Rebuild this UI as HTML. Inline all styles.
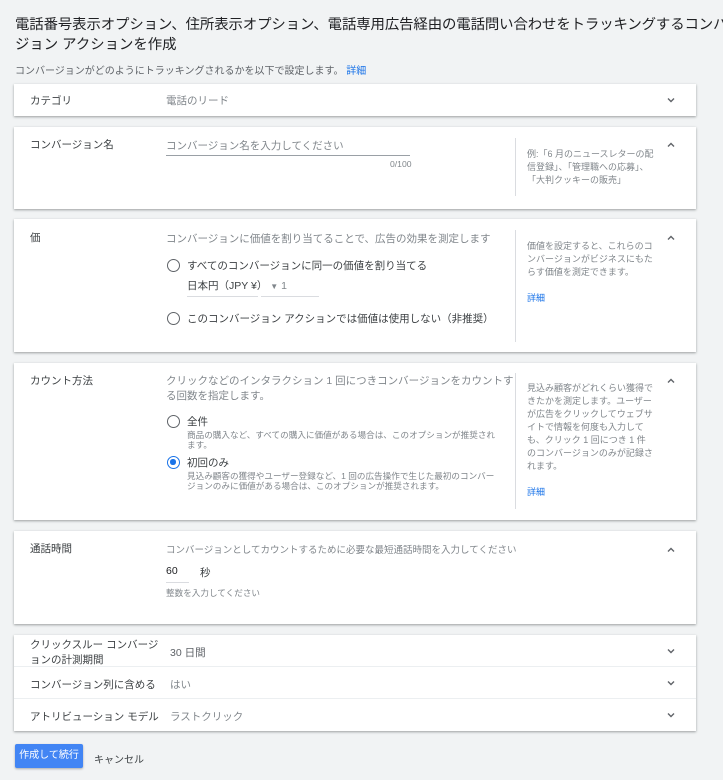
<!DOCTYPE html>
<html><head><meta charset="utf-8"><style>
*{margin:0;padding:0;box-sizing:border-box}
body{width:723px;height:780px;background:#f1f3f4;font-family:"Liberation Sans","Noto Sans CJK JP",sans-serif;color:#3c4043;position:relative;overflow:hidden}
.a{position:absolute;white-space:nowrap}
.card{position:absolute;left:14px;width:682px;background:#fff;box-shadow:0 1px 2px rgba(60,64,67,.35),0 1px 3px rgba(60,64,67,.15)}
.lbl{font-size:10.5px;color:#3c4043}
.g{color:#80868b}
.s{font-size:10.5px}
.xs{font-size:8.6px;color:#80868b}
.side{position:absolute;left:501px;width:1px;background:#dadce0}
.sidet{position:absolute;left:513px;width:127px;font-size:9px;line-height:13px;color:#80868b;white-space:normal}
.chev{position:absolute;left:652px;width:10px;height:10px}
.radio{position:absolute;width:13px;height:13px;border:1.6px solid #5f6368;border-radius:50%}
.link{color:#1a73e8}
</style></head><body>
<div class="a" style="left:15px;top:13px;font-size:14.4px;letter-spacing:-0.1px;color:#202124">電話番号表示オプション、住所表示オプション、電話専用広告経由の電話問い合わせをトラッキングするコンバー</div>
<div class="a" style="left:15px;top:33px;font-size:14.4px;color:#202124">ジョン アクションを作成</div>
<div class="a" style="left:15px;top:62px;font-size:10px;color:#5f6368">コンバージョンがどのようにトラッキングされるかを以下で設定します。 <span class="link">詳細</span></div>

<svg width="0" height="0" style="position:absolute"><defs>
<symbol id="dn" viewBox="0 0 10 10"><path d="M2 3.5L5 6.5L8 3.5" fill="none" stroke="#5f6368" stroke-width="1.4"/></symbol>
<symbol id="up" viewBox="0 0 10 10"><path d="M2 6.5L5 3.5L8 6.5" fill="none" stroke="#5f6368" stroke-width="1.4"/></symbol>
</defs></svg>

<div class="card" style="top:84px;height:32px">
<div class="a lbl" style="left:16px;top:9px">カテゴリ</div>
<div class="a s g" style="left:152px;top:9px">電話のリード</div>
<svg class="chev" style="top:11px"><use href="#dn"/></svg>
</div>

<div class="card" style="top:127px;height:82px">
<div class="a lbl" style="left:16px;top:10px">コンバージョン名</div>
<div class="a s g" style="left:152px;top:11px">コンバージョン名を入力してください</div>
<div class="a" style="left:152px;top:28px;width:244px;height:1px;background:#9aa0a6"></div>
<div class="a xs" style="left:376px;top:32px">0/100</div>
<div class="side" style="top:11px;height:58px"></div>
<div class="sidet" style="top:21px">例:「6 月のニュースレターの配信登録」、「管理職への応募」、「大判クッキーの販売」</div>
<svg class="chev" style="top:13px"><use href="#up"/></svg>
</div>

<div class="card" style="top:219px;height:133px">
<div class="a lbl" style="left:16px;top:11px">価</div>
<div class="a s g" style="left:152px;top:12px">コンバージョンに価値を割り当てることで、広告の効果を測定します</div>
<div class="radio" style="left:153px;top:40px"></div>
<div class="a s" style="left:173px;top:39px">すべてのコンバージョンに同一の価値を割り当てる</div>
<div class="a s" style="left:173px;top:59px">日本円（JPY ¥） <span class="g" style="font-size:8px">▼</span> <span class="g">1</span></div>
<div class="a" style="left:173px;top:77px;width:71px;height:1px;background:#dadce0"></div>
<div class="a" style="left:247px;top:77px;width:58px;height:1px;background:#dadce0"></div>
<div class="radio" style="left:153px;top:93px"></div>
<div class="a s" style="left:173px;top:92px">このコンバージョン アクションでは価値は使用しない（非推奨）</div>
<div class="side" style="top:11px;height:112px"></div>
<div class="sidet" style="top:21px">価値を設定すると、これらのコンバージョンがビジネスにもたらす価値を測定できます。</div>
<div class="a link" style="left:513px;top:72px;font-size:9px">詳細</div>
<svg class="chev" style="top:14px"><use href="#up"/></svg>
</div>

<div class="card" style="top:363px;height:157px">
<div class="a lbl" style="left:16px;top:10px">カウント方法</div>
<div class="a s g" style="left:152px;top:11px;line-height:15px">クリックなどのインタラクション 1 回につきコンバージョンをカウントす<br>る回数を指定します。</div>
<div class="radio" style="left:153px;top:52px"></div>
<div class="a s" style="left:173px;top:51px">全件</div>
<div class="a xs" style="left:173px;top:67px;line-height:10px">商品の購入など、すべての購入に価値がある場合は、このオプションが推奨され<br>ます。</div>
<div class="radio" style="left:153px;top:93px;border-color:#1a73e8"><div style="position:absolute;left:2.2px;top:2.2px;width:5.4px;height:5.4px;border-radius:50%;background:#1a73e8"></div></div>
<div class="a s" style="left:173px;top:92px">初回のみ</div>
<div class="a xs" style="left:173px;top:108px;line-height:10px">見込み顧客の獲得やユーザー登録など、1 回の広告操作で生じた最初のコンバー<br>ジョンのみに価値がある場合は、このオプションが推奨されます。</div>
<div class="side" style="top:10px;height:136px"></div>
<div class="sidet" style="top:19px">見込み顧客がどれくらい獲得できたかを測定します。ユーザーが広告をクリックしてウェブサイトで情報を何度も入力しても、クリック 1 回につき 1 件のコンバージョンのみが記録されます。</div>
<div class="a link" style="left:513px;top:122px;font-size:9px">詳細</div>
<svg class="chev" style="top:13px"><use href="#up"/></svg>
</div>

<div class="card" style="top:531px;height:93px">
<div class="a lbl" style="left:16px;top:10px">通話時間</div>
<div class="a g" style="left:152px;top:11px;font-size:9.5px">コンバージョンとしてカウントするために必要な最短通話時間を入力してください</div>
<div class="a s" style="left:152px;top:34px;color:#202124">60</div>
<div class="a s" style="left:186px;top:34px">秒</div>
<div class="a" style="left:152px;top:51px;width:23px;height:1px;background:#dadce0"></div>
<div class="a xs" style="left:152px;top:56px">整数を入力してください</div>
<svg class="chev" style="top:14px"><use href="#up"/></svg>
</div>

<div class="card" style="top:635px;height:96px">
<div class="a lbl" style="left:16px;top:3px;line-height:15px">クリックスルー コンバージ<br>ョンの計測期間</div>
<div class="a s" style="left:156px;top:10px;color:#5f6368">30 日間</div>
<svg class="chev" style="top:11px"><use href="#dn"/></svg>
<div class="a" style="left:0;top:31px;width:682px;height:1px;background:#eceff1"></div>
<div class="a lbl" style="left:16px;top:42px">コンバージョン列に含める</div>
<div class="a s g" style="left:156px;top:42px">はい</div>
<svg class="chev" style="top:43px"><use href="#dn"/></svg>
<div class="a" style="left:0;top:63px;width:682px;height:1px;background:#eceff1"></div>
<div class="a lbl" style="left:16px;top:74px">アトリビューション モデル</div>
<div class="a s g" style="left:156px;top:74px">ラストクリック</div>
<svg class="chev" style="top:75px"><use href="#dn"/></svg>
</div>

<div class="a" style="left:15px;top:744px;width:68px;height:24px;background:#4285f4;border-radius:2px;box-shadow:0 1px 2px rgba(0,0,0,.3);color:#fff;font-size:10px;line-height:24px;text-align:center">作成して続行</div>
<div class="a" style="left:94px;top:751px;font-size:10px;color:#3c4043">キャンセル</div>
</body></html>
